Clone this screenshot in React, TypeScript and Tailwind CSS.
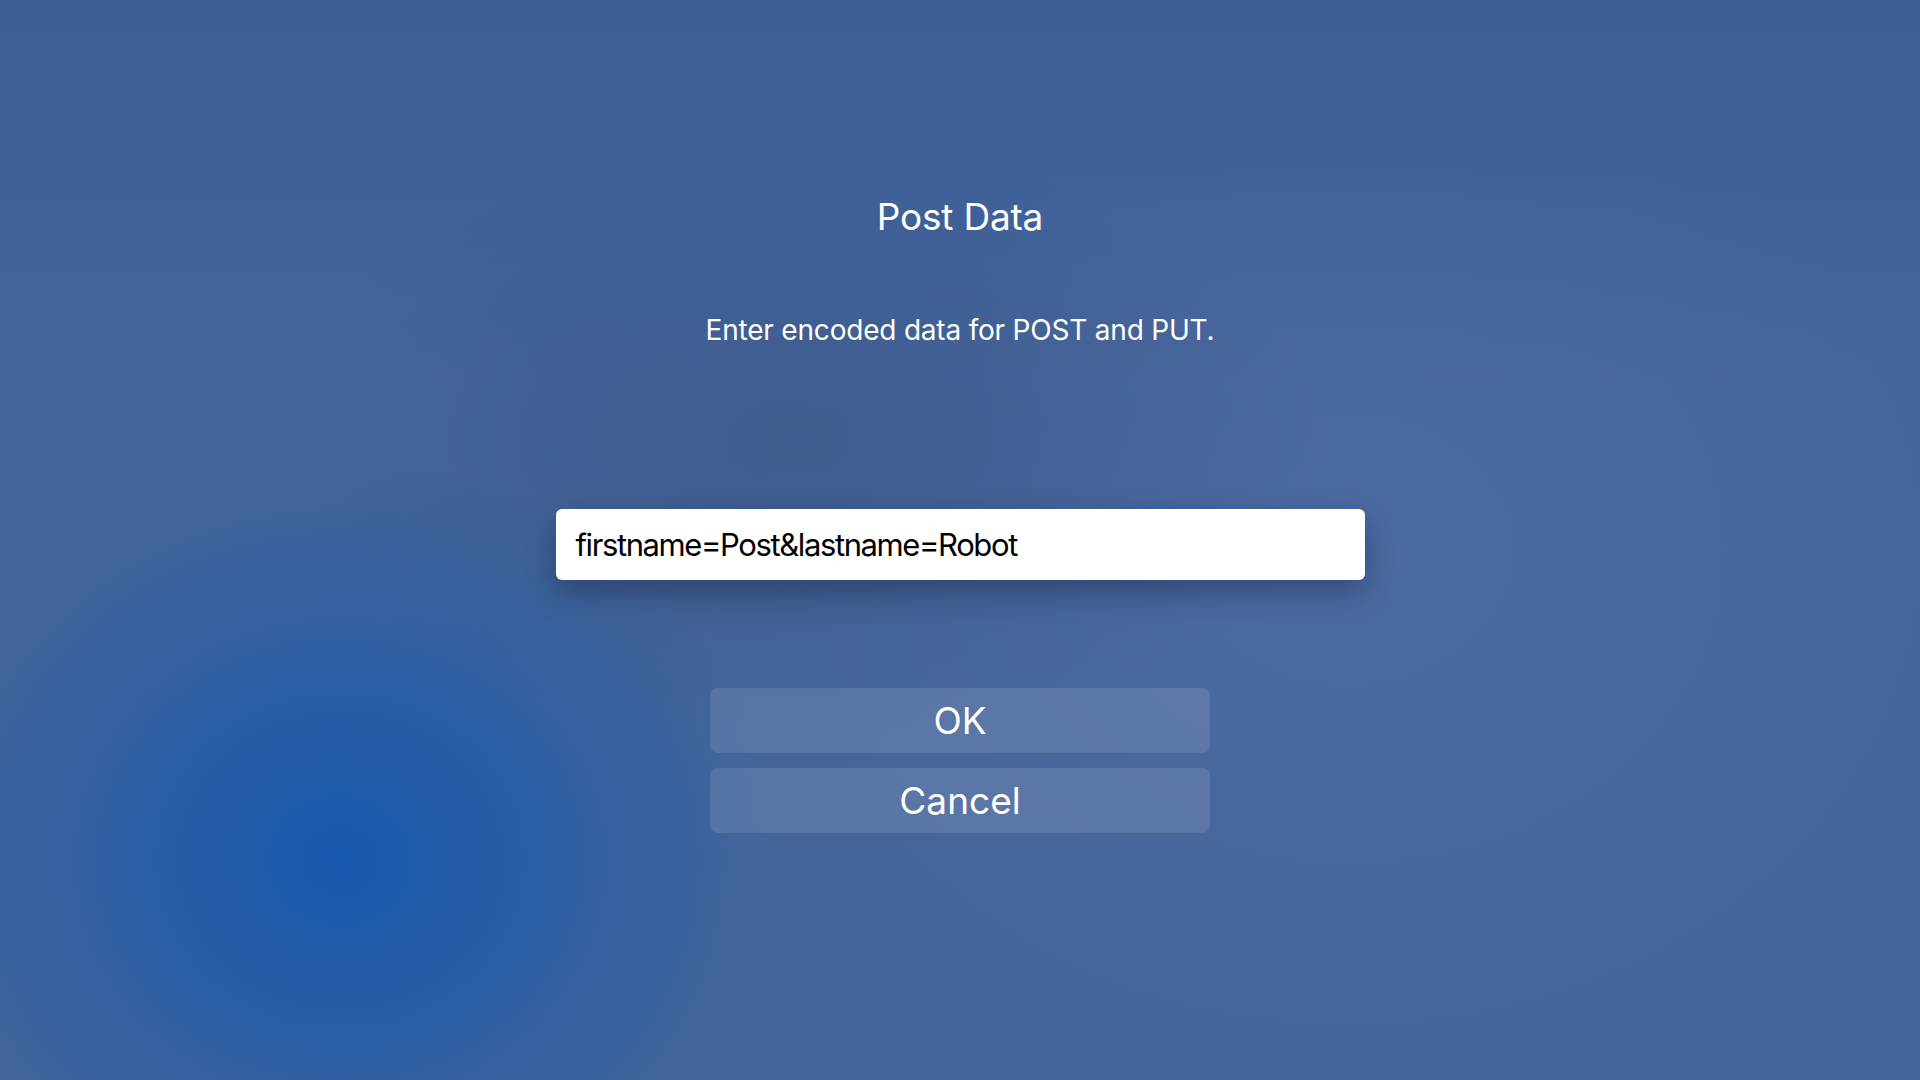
import React from "react";

const font = { fontFamily: "Inter, 'Noto Sans', sans-serif" };

const DialogButton = ({ label }: { label: string }) => (
  <button className="w-[500px] h-[65px] rounded-lg bg-white/[0.11] text-white text-[37px] leading-none flex items-center justify-center">
    {label}
  </button>
);

export default function App() {
  return (
    <div
      style={font}
      className="relative w-full h-[1080px] overflow-hidden bg-[#45659a] bg-[radial-gradient(ellipse_440px_400px_at_340px_860px,#1658ad_0%,rgba(28,90,170,0.7)_40%,rgba(69,101,154,0)_100%),linear-gradient(180deg,rgba(50,88,150,0.6)_0%,rgba(69,101,154,0)_35%),radial-gradient(ellipse_520px_300px_at_800px_440px,rgba(55,80,125,0.45)_0%,rgba(69,101,154,0)_100%),radial-gradient(ellipse_600px_500px_at_1350px_550px,rgba(82,112,168,0.55)_0%,rgba(69,101,154,0)_100%)]"
    >
      <div className="flex flex-col items-center">
        <h1 className="pt-[198px] text-white text-[37px] leading-none font-normal tracking-[-0.2px]">Post Data</h1>
        <p className="mt-[81px] text-white text-[28px] leading-none tracking-[-0.2px]">Enter encoded data for POST and PUT.</p>

        <div className="mt-[165px] w-[809px] h-[71px] bg-white rounded-md shadow-[0_12px_30px_rgba(20,35,70,0.45)] flex items-center px-5">
          <span className="text-black text-[31px] leading-none tracking-[-1.4px]">firstname=Post&amp;lastname=Robot</span>
        </div>

        <div className="mt-[108px] flex flex-col gap-[15px]">
          <DialogButton label="OK" />
          <DialogButton label="Cancel" />
        </div>
      </div>
    </div>
  );
}
